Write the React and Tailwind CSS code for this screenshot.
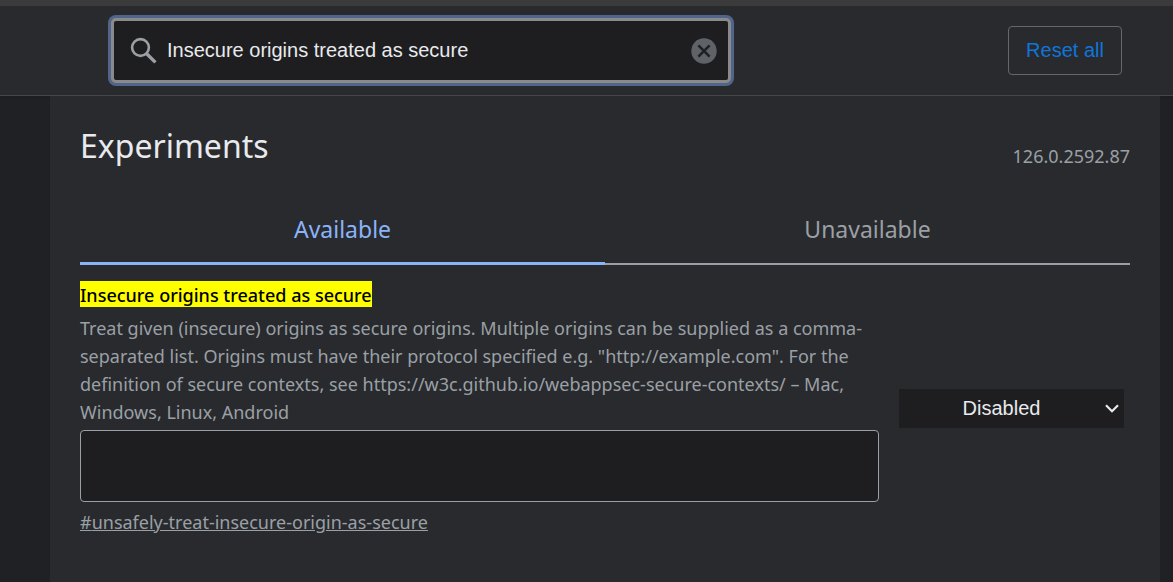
import { useState } from 'react'

const TABS = ['Available', 'Unavailable']

const EXPERIMENT = {
    id: 'unsafely-treat-insecure-origin-as-secure',
    name: 'Insecure origins treated as secure',
    description:
        'Treat given (insecure) origins as secure origins. Multiple origins can be supplied as a comma-separated list. Origins must have their protocol specified e.g. "http://example.com". For the definition of secure contexts, see https://w3c.github.io/webappsec-secure-contexts/ – Mac, Windows, Linux, Android',
}

function SearchIcon() {
    return (
        <svg className="size-[27px] shrink-0" viewBox="0 0 27 27" fill="none" stroke="#9aa0a6" aria-hidden="true">
            <circle cx="10.5" cy="10.5" r="8.4" strokeWidth="2.6" />
            <path d="M16.2 16.2l9.2 9.2" strokeWidth="3.4" />
        </svg>
    )
}

function ClearIcon() {
    return (
        <svg className="size-[26px]" viewBox="0 0 26 26" fill="none" aria-hidden="true">
            <circle cx="13" cy="13" r="12.7" fill="#5f6368" />
            <path d="M7.4 7.4l11.2 11.2M18.6 7.4L7.4 18.6" stroke="#202124" strokeWidth="2.6" />
        </svg>
    )
}

function Header({ query, setQuery, onReset }) {
    return (
        <header className="border-b border-[#46474b] bg-[#292a2d] shadow-sm">
            <div className="h-[6px] bg-[#3b3b3b]" />
            <div className="flex h-[89px] items-center justify-between gap-6 pr-[51px] pl-[111px]">
                <div className="flex h-[65px] max-w-[620px] flex-1 items-center gap-[10px] rounded-[5px] border-[3px] border-[#8a8a8a] bg-[#1e1e20] pr-[11px] pl-4 ring-[3px] ring-[#51658c]">
                    <SearchIcon />
                    <input
                        type="text"
                        aria-label="Search flags"
                        value={query}
                        onChange={(e) => setQuery(e.target.value)}
                        className="min-w-0 flex-1 bg-transparent pb-[2px] text-[20px] text-[#e8eaed] outline-none"
                    />
                    <button type="button" aria-label="Clear search" onClick={() => setQuery('')}>
                        <ClearIcon />
                    </button>
                </div>
                <button
                    type="button"
                    onClick={onReset}
                    className="h-[49px] w-[114px] shrink-0 rounded border border-[#66676a] pb-[2px] text-[20px] text-[#0f75dc]"
                >
                    Reset all
                </button>
            </div>
        </header>
    )
}

function Experiment({ experiment, state, setState, origins, setOrigins }) {
    return (
        <section className="flex items-center gap-5 pt-4 pr-[6px]">
            <div className="min-w-0 flex-1">
                <h2 className="text-[18px] leading-6 font-medium text-black">
                    <mark className="inline-block bg-[#ffff00] pt-[2px]">{experiment.name}</mark>
                </h2>
                <p className="mt-[7px] text-[18px] leading-7 text-[#9aa0a6]">{experiment.description}</p>
                <textarea
                    aria-label={experiment.name}
                    value={origins}
                    onChange={(e) => setOrigins(e.target.value)}
                    className="mt-1 block h-[72px] w-full resize-none rounded border border-[#9aa0a6] bg-[#1e1e20] p-2 text-[18px] text-[#e8eaed] outline-none"
                />
                <a href={`#${experiment.id}`} className="mt-2 inline-block text-[18px] leading-6 text-[#9aa0a6] underline">
                    #{experiment.id}
                </a>
            </div>
            <div className="relative w-[225px] shrink-0">
                <select
                    aria-label={`${experiment.name} state`}
                    value={state}
                    onChange={(e) => setState(e.target.value)}
                    className="h-[39px] w-full appearance-none bg-[#1e1e20] pr-5 text-center font-['Liberation_Sans',Arial,sans-serif] text-[20px] text-[#e8eaed]"
                >
                    <option>Disabled</option>
                    <option>Enabled</option>
                </select>
                <svg
                    className="pointer-events-none absolute top-[15px] right-[5px] h-[10px] w-[14px]"
                    viewBox="0 0 14 10"
                    fill="none"
                    stroke="#e8eaed"
                    strokeWidth="2.2"
                    aria-hidden="true"
                >
                    <path d="M1 1.2l6 6 6-6" />
                </svg>
            </div>
        </section>
    )
}

export default function App() {
    const [query, setQuery] = useState(EXPERIMENT.name)
    const [tab, setTab] = useState('Available')
    const [state, setState] = useState('Disabled')
    const [origins, setOrigins] = useState('')

    const reset = () => {
        setState('Disabled')
        setOrigins('')
    }

    return (
        <div className="flex min-h-screen flex-col bg-[#202124] font-['Liberation_Sans',Arial,sans-serif]">
            <Header query={query} setQuery={setQuery} onReset={reset} />
            <main className="mr-[13px] ml-[50px] flex-1 bg-[#292a2d] px-[30px] pt-6 font-['Noto_Sans','Open_Sans',sans-serif]">
                <div className="flex items-center justify-between">
                    <h1 className="text-[32px] leading-[52px] text-[#e8eaed]">Experiments</h1>
                    <span className="pt-5 text-[18px] leading-7 text-[#9aa0a6]">126.0.2592.87</span>
                </div>

                <div role="tablist" className="mt-5 grid grid-cols-2">
                    {TABS.map((name) => (
                        <button
                            key={name}
                            type="button"
                            role="tab"
                            aria-selected={tab === name}
                            onClick={() => setTab(name)}
                            className={`flex h-[73px] items-center justify-center pt-1 text-[23px] ${
                                tab === name
                                    ? 'border-b-[3px] border-[#8ab4f8] text-[#8ab4f8]'
                                    : 'border-b-2 border-[#9aa0a6] text-[#9aa0a6]'
                            }`}
                        >
                            {name}
                        </button>
                    ))}
                </div>

                {tab === 'Available' && (
                    <Experiment
                        experiment={EXPERIMENT}
                        state={state}
                        setState={setState}
                        origins={origins}
                        setOrigins={setOrigins}
                    />
                )}
            </main>
        </div>
    )
}
